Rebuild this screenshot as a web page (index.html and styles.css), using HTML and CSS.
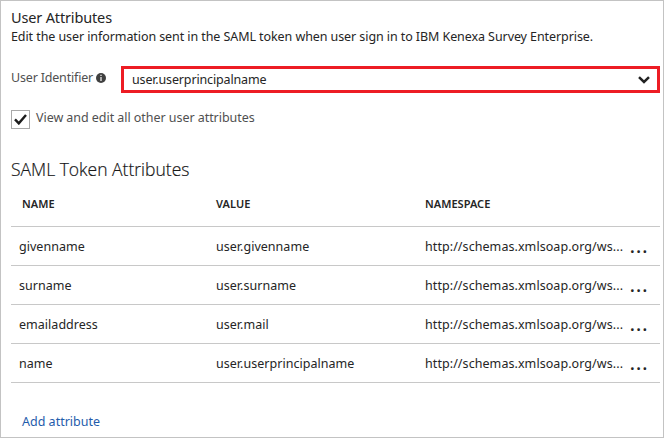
FILE: index.html
```html
<!DOCTYPE html>
<html lang="en">
<head>
<meta charset="utf-8">
<title>User Attributes</title>
<link rel="stylesheet" href="styles.css">
</head>
<body>
<main class="panel">
  <h1 class="title"><span>User Attributes</span></h1>
  <p class="desc">Edit the user information sent in the SAML token when user sign in to IBM Kenexa Survey Enterprise.</p>
  <div class="field">
    <span class="label">User Identifier</span>
    <svg class="info" viewBox="0 0 10 10"><circle cx="5" cy="5" r="5" fill="#404040"/><path d="M5 4v4" stroke="#ccc" stroke-width="1.6" fill="none"/><path d="M4.2 1.7h1.6v1.4H4.2z" fill="#ccc"/></svg>
    <div class="select">
      <span class="selected">user.userprincipalname</span>
      <svg class="chevron" viewBox="0 0 12 8"><path d="M1 1.2l5 4.8 5-4.8" stroke="#222" stroke-width="2.5" fill="none"/></svg>
    </div>
  </div>
  <div class="check">
    <span class="box"><svg class="tick" viewBox="0 0 13 11"><path d="M1 5.4l3.8 4L12 1" stroke="#1c1c1c" stroke-width="2.4" fill="none"/></svg></span>
    <span class="check-label">View and edit all other user attributes</span>
  </div>
  <h2 class="heading"><span>SAML Token Attributes</span></h2>
  <div class="table">
    <div class="row head"><span class="h-name">NAME</span><span class="h-value">VALUE</span><span class="h-ns">NAMESPACE</span></div>
    <div class="row"><span>givenname</span><span>user.givenname</span><span class="ns">http://schemas.xmlsoap.org/ws...</span><span class="more">...</span></div>
    <div class="row"><span>surname</span><span>user.surname</span><span class="ns">http://schemas.xmlsoap.org/ws...</span><span class="more">...</span></div>
    <div class="row"><span>emailaddress</span><span>user.mail</span><span class="ns">http://schemas.xmlsoap.org/ws...</span><span class="more">...</span></div>
    <div class="row"><span>name</span><span>user.userprincipalname</span><span class="ns">http://schemas.xmlsoap.org/ws...</span><span class="more">...</span></div>
  </div>
  <a class="add">Add attribute</a>
</main>
</body>
</html>
```
FILE: styles.css
```css
* { box-sizing: border-box; }
body { margin: 0; background: #fff; }
.panel {
  width: 664px;
  height: 438px;
  border: 1px solid #c3c3c3;
  padding: 6px 3px 0 10px;
  font-family: "Noto Sans", "Open Sans", sans-serif;
  font-size: 12.5px;
  color: #252525;
  white-space: nowrap;
  overflow: hidden;
}
.title { margin: 0; font-size: 14.5px; font-weight: 400; line-height: 20px; letter-spacing: -0.15px; }
.desc { margin: 0; line-height: 20px; letter-spacing: -0.08px; }
.field { display: flex; height: 27px; margin-top: 19px; align-items: center; }
.label { width: 85px; color: #505050; line-height: 20px; margin-top: -3px; letter-spacing: -0.18px; }
.info { width: 10px; height: 10px; margin-top: -4px; }
.select {
  display: flex;
  align-items: center;
  justify-content: space-between;
  width: 539px;
  height: 27px;
  margin-left: 15px;
  padding: 0 7px 0 8px;
  border: 3px solid #ed1c24;
}
.selected { letter-spacing: -0.15px; }
.chevron { width: 12px; height: 8px; margin-top: 1px; }
.check { display: flex; margin-top: 17px; height: 19px; }
.box { display: flex; align-items: center; justify-content: center; width: 19px; height: 19px; border: 1px solid #a9a9a9; }
.tick { width: 13px; height: 11px; }
.check-label { margin-left: 6px; line-height: 16px; color: #505050; letter-spacing: -0.05px; }
.heading { margin: 27px 0 0; font-family: "Open Sans", sans-serif; font-size: 17.5px; font-weight: 300; line-height: 26px; color: #111; -webkit-text-stroke: 0.2px #222; }
.table { width: 649px; margin-top: 5px; }
.row { display: grid; grid-template-columns: 197px 209px 205px 1fr; height: 39px; padding-left: 8px; border-bottom: 1px solid #c8c8c8; line-height: 39px; letter-spacing: 0.03px; }
.head { height: 40px; font-size: 11px; font-weight: 600; line-height: 34px; }
.h-name { padding-left: 3px; }
.ns { letter-spacing: 0.07px; }
.more { font-size: 17px; font-weight: 600; letter-spacing: 1.6px; line-height: 39px; }
.add { display: block; margin: 29px 0 0 11px; line-height: 20px; color: #1f5cab; }
```
